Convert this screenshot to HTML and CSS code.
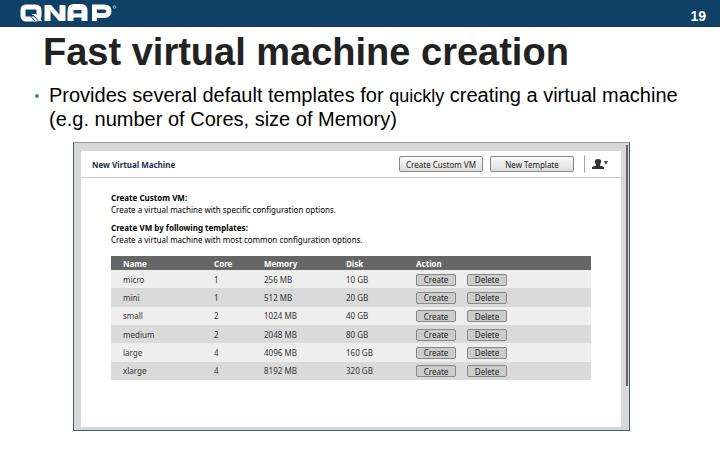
FILE: index.html
```
<!DOCTYPE html>
<html lang="en">
<head>
    <meta charset="UTF-8">
    <meta name="viewport" content="width=device-width, initial-scale=1.0">
    <title>Fast virtual machine creation</title>
    <link rel="stylesheet" href="styles.css">
</head>
<body>
    <header class="topbar">
        <svg class="logo" viewBox="0 0 98 18" role="img" aria-label="QNAP">
            <g fill="none" stroke="#fff">
                <rect x="3" y="3" width="16" height="12" rx="3" stroke-width="5"/>
                <path d="M27.500 17V1M42.500 17V1" stroke-width="6"/>
                <path d="M50.500 17V7Q50.500 3 54 3H61Q64.500 3 64.500 7V17" stroke-width="6"/>
                <path d="M50 11.500H65" stroke-width="4"/>
                <path d="M74.500 17V3H84Q89 3 89 7Q89 11.500 84 11.500H74" stroke-width="5"/>
            </g>
            <path d="M25 1H31L45 17H39Z" fill="#fff"/>
            <path d="M12 10L16 10L22 17H18Z" fill="#fff"/>
            <path d="M10.500 12L15 17M13 11L18.500 17" stroke="#0f4166" stroke-width="1"/>
            <circle cx="94.500" cy="3" r="1.300" fill="none" stroke="#8db4cd"/>
        </svg>
        <span class="page-number">19</span>
    </header>

    <main>
        <h1>Fast virtual machine creation</h1>
        <ul class="points">
            <li>Provides several default templates for <small>quickly</small> creating a virtual machine (e.g. number of Cores, size of Memory)</li>
        </ul>

        <div class="window">
            <section class="panel">
                <div class="toolbar">
                    <h2>New Virtual Machine</h2>
                    <button class="tool-btn">Create Custom VM</button>
                    <button class="tool-btn">New Template</button>
                    <button class="user-btn" aria-label="User menu">
                        <svg viewBox="0 0 18 10" width="18" height="10">
                            <path d="M6 0C8.500 0 9.500 1 9 3.500L8 5.500V6.500L12 8V10H0V8L4 6.500V5.500L3 3.500C2.500 1 3.500 0 6 0Z" fill="#333"/>
                            <path d="M12 2H16L14 6Z" fill="#444"/>
                        </svg>
                    </button>
                </div>
                <div class="content">
                    <h3>Create Custom VM:</h3>
                    <p>Create a virtual machine with specific configuration options.</p>
                    <h3>Create VM by following templates:</h3>
                    <p>Create a virtual machine with most common configuration options.</p>
                    <table>
                        <thead>
                            <tr><th class="name">Name</th><th class="core">Core</th><th class="memory">Memory</th><th class="disk">Disk</th><th>Action</th></tr>
                        </thead>
                        <tbody>
                            <tr><td>micro</td><td>1</td><td>256 MB</td><td>10 GB</td><td><button>Create</button><button>Delete</button></td></tr>
                            <tr><td>mini</td><td>1</td><td>512 MB</td><td>20 GB</td><td><button>Create</button><button>Delete</button></td></tr>
                            <tr><td>small</td><td>2</td><td>1024 MB</td><td>40 GB</td><td><button>Create</button><button>Delete</button></td></tr>
                            <tr><td>medium</td><td>2</td><td>2048 MB</td><td>80 GB</td><td><button>Create</button><button>Delete</button></td></tr>
                            <tr><td>large</td><td>4</td><td>4096 MB</td><td>160 GB</td><td><button>Create</button><button>Delete</button></td></tr>
                            <tr><td>xlarge</td><td>4</td><td>8192 MB</td><td>320 GB</td><td><button>Create</button><button>Delete</button></td></tr>
                        </tbody>
                    </table>
                </div>
            </section>
        </div>
    </main>
</body>
</html>
```
FILE: styles.css
```
* {
    box-sizing: border-box;
}
body {
    margin: 0;
    background-color: #fff;
    color: #000;
    font-family: "Liberation Sans", Arial, sans-serif;
}
h1, h2, h3, p, ul {
    margin: 0;
}
.topbar {
    display: flex;
    justify-content: space-between;
    align-items: center;
    height: 27px;
    padding: 0 14px 0 20px;
    background-color: #0f4166;
    border-bottom: 1px solid #1f3650;
}
.logo {
    width: 98px;
    height: 18px;
}
.page-number {
    padding-top: 6px;
    color: #fff;
    font-size: 14px;
    font-weight: bold;
}
h1 {
    padding: 3px 0 0 43px;
    color: #222;
    font-size: 38px;
    line-height: 44px;
}
.points {
    padding: 9px 20px 0 49px;
    list-style: none;
    font-size: 20px;
    line-height: 24px;
}
.points li {
    position: relative;
}
.points li::before {
    content: "";
    position: absolute;
    left: -14px;
    top: 11px;
    width: 4px;
    height: 4px;
    border-radius: 50%;
    background-color: #3f87a6;
}
.points small {
    font-size: 18px;
    line-height: 20px;
}

/* Screenshot window */
.window {
    position: relative;
    margin: 11px 90px 20px 73px;
    padding: 8px 8px 3px 7px;
    background-color: #d8d8d8;
    border: 1px solid #3a6078;
    border-top-color: #999;
    font-family: "Noto Sans", "DejaVu Sans", sans-serif;
    font-size: 8px;
}
/* scrollbar on the right edge */
.window::after {
    content: "";
    position: absolute;
    top: 2px;
    right: 1px;
    width: 2px;
    height: 84%;
    background-color: #666;
}
.panel {
    min-height: 276px;
    background-color: #fff;
}
.toolbar {
    display: flex;
    align-items: center;
    gap: 7px;
    height: 27px;
    padding: 0 11px;
    border-bottom: 1px solid #ccc;
}
.toolbar h2 {
    flex: 1;
    color: #18324c;
    font-size: 8px;
}
button {
    padding: 0;
    border: 1px solid #888;
    border-radius: 2px;
    background-color: #ccc;
    color: #222;
    font-family: inherit;
    font-size: 8px;
    line-height: 9px;
}
.tool-btn {
    width: 84px;
    height: 16px;
    background: linear-gradient(#fafafa, #ddd);
}
.user-btn {
    display: flex;
    align-items: center;
    height: 18px;
    margin-left: 3px;
    padding-left: 7px;
    border: none;
    border-left: 1px solid #aaa;
    border-radius: 0;
    background: none;
}
.content {
    padding: 14px 30px 0;
}
.content h3 {
    font-size: 8px;
    line-height: 12px;
}
.content p {
    margin-bottom: 6px;
    line-height: 12px;
}
table {
    width: 100%;
    height: 124px;
    margin-top: 10px;
    border-collapse: collapse;
    table-layout: fixed;
}
th, td {
    padding: 0 0 0 12px;
    text-align: left;
}
th {
    height: 14px;
    background-color: #666;
    color: #fff;
}
td {
    color: #333;
}
tbody tr {
    background-color: #eee;
}
tbody tr:nth-child(even) {
    background-color: #dadada;
}
.name {
    width: 91px;
}
.core {
    width: 50px;
}
.memory {
    width: 82px;
}
.disk {
    width: 70px;
}
td button {
    width: 40px;
    height: 12px;
    margin-right: 11px;
    vertical-align: middle;
}
```
